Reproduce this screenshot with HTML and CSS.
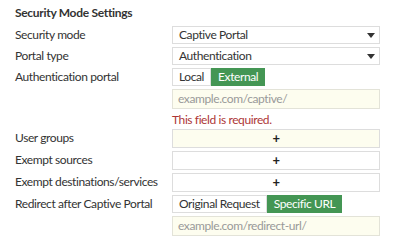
FILE: index.html
```html
<!DOCTYPE html>
<html lang="en">
  <head>
    <meta charset="UTF-8" />
    <title>Security Mode Settings</title>
    <link rel="stylesheet" href="styles.css">
  </head>
  <body>
    <div class="panel">
      <h3>Security Mode Settings</h3>

      <div class="row">
        <label>Security mode</label>
        <div class="field">
          <div class="select">Captive Portal<span class="caret"></span></div>
        </div>
      </div>

      <div class="row">
        <label>Portal type</label>
        <div class="field">
          <div class="select">Authentication<span class="caret"></span></div>
        </div>
      </div>

      <div class="row">
        <label>Authentication portal</label>
        <div class="field">
          <div class="toggle">
            <span class="opt">Local</span>
            <span class="opt active">External</span>
          </div>
          <div class="text-input">example.com/captive/</div>
          <div class="error">This field is required.</div>
        </div>
      </div>

      <div class="row">
        <label>User groups</label>
        <div class="field">
          <div class="adder required">+</div>
        </div>
      </div>

      <div class="row">
        <label>Exempt sources</label>
        <div class="field">
          <div class="adder">+</div>
        </div>
      </div>

      <div class="row">
        <label>Exempt destinations/services</label>
        <div class="field">
          <div class="adder">+</div>
        </div>
      </div>

      <div class="row">
        <label>Redirect after Captive Portal</label>
        <div class="field">
          <div class="toggle">
            <span class="opt">Original Request</span>
            <span class="opt active">Specific URL</span>
          </div>
          <div class="text-input">example.com/redirect-url/</div>
        </div>
      </div>
    </div>
  </body>
</html>
```

FILE: styles.css
```css
* {
  box-sizing: border-box;
  margin: 0;
  padding: 0;
}

body {
  background: #fff;
  color: #333;
  font-family: Lato, "Open Sans", sans-serif;
  font-size: 12px;
  letter-spacing: -0.4px;
}

.panel {
  width: 380px;
  padding: 4px 0 0 15px;
}

h3 {
  font-size: 12px;
  font-weight: 700;
  letter-spacing: -0.3px;
  height: 22px;
  line-height: 18px;
}

.row {
  display: flex;
  margin-bottom: 3px;
}

label {
  width: 157px;
  line-height: 18px;
  white-space: nowrap;
  flex-shrink: 0;
}

.field {
  flex: 1;
  display: flex;
  flex-direction: column;
  gap: 3px;
}

.select {
  height: 18px;
  border: 1px solid #ddd;
  padding: 0 4px 0 6px;
  line-height: 16px;
  display: flex;
  justify-content: space-between;
  align-items: center;
}

.caret {
  width: 0;
  height: 0;
  border-left: 4px solid transparent;
  border-right: 4px solid transparent;
  border-top: 5px solid #333;
}

.toggle {
  display: flex;
  height: 18px;
}

.opt {
  border: 1px solid #ddd;
  padding: 0 6px;
  line-height: 16px;
}

.opt.active {
  background: #449654;
  border-color: #449654;
  color: #fff;
}

.text-input {
  height: 20px;
  border: 1px solid #e3e3d8;
  background: #fdfdef;
  color: #999;
  padding: 0 5px;
  line-height: 18px;
}

.error {
  color: #ad3636;
  line-height: 16px;
  margin-bottom: -2px;
}

.adder {
  height: 19px;
  border: 1px solid #ddd;
  text-align: center;
  font-weight: 700;
  font-size: 13px;
  color: #222;
  line-height: 17px;
}

.adder.required {
  background: #fdfdef;
}
```
